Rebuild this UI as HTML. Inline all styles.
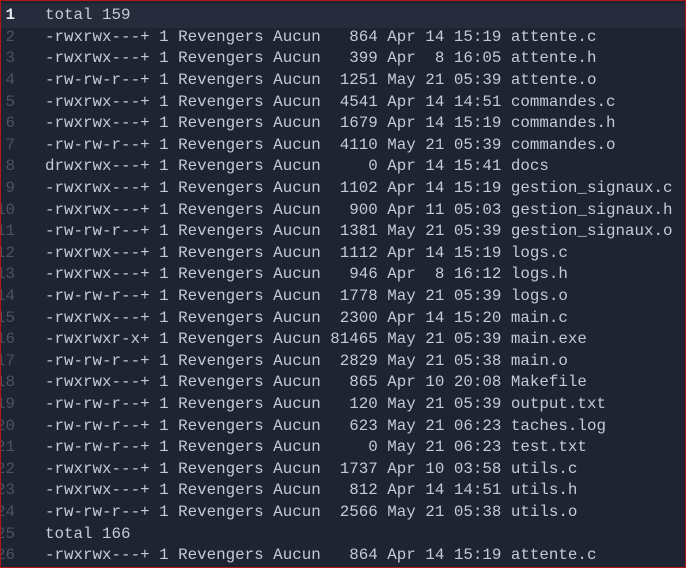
<!DOCTYPE html>
<html><head><meta charset="utf-8"><style>
html,body{margin:0;padding:0;background:#1f2433;width:686px;height:568px;overflow:hidden}
.wrap{position:absolute;left:0;top:0;width:684px;height:566px;border:1px solid #b01818;background:#1f2433;overflow:hidden}
.in{position:absolute;left:0;top:2px;width:684px;height:566px}
.row{position:absolute;left:0;width:684px;height:21.6px;line-height:21.6px;font-family:"Liberation Mono",monospace;font-size:15.85px;white-space:pre;color:#c5cad4}
.hl{background:#272c3c}
.n{position:absolute;right:670px;color:#4b5264;text-align:right}
.hl .n{color:#e8eaf0;font-weight:bold}
.t{position:absolute;left:44px}
</style></head><body><div class="wrap"><div class="in">
<div class="row hl" style="top:1.2px;height:23.6px;line-height:23.6px"><span class="n">1</span><span class="t">total 159</span></div>
<div class="row" style="top:23.8px"><span class="n">2</span><span class="t">-rwxrwx---+ 1 Revengers Aucun   864 Apr 14 15:19 attente.c</span></div>
<div class="row" style="top:45.4px"><span class="n">3</span><span class="t">-rwxrwx---+ 1 Revengers Aucun   399 Apr  8 16:05 attente.h</span></div>
<div class="row" style="top:67px"><span class="n">4</span><span class="t">-rw-rw-r--+ 1 Revengers Aucun  1251 May 21 05:39 attente.o</span></div>
<div class="row" style="top:88.6px"><span class="n">5</span><span class="t">-rwxrwx---+ 1 Revengers Aucun  4541 Apr 14 14:51 commandes.c</span></div>
<div class="row" style="top:110.2px"><span class="n">6</span><span class="t">-rwxrwx---+ 1 Revengers Aucun  1679 Apr 14 15:19 commandes.h</span></div>
<div class="row" style="top:131.8px"><span class="n">7</span><span class="t">-rw-rw-r--+ 1 Revengers Aucun  4110 May 21 05:39 commandes.o</span></div>
<div class="row" style="top:153.4px"><span class="n">8</span><span class="t">drwxrwx---+ 1 Revengers Aucun     0 Apr 14 15:41 docs</span></div>
<div class="row" style="top:175px"><span class="n">9</span><span class="t">-rwxrwx---+ 1 Revengers Aucun  1102 Apr 14 15:19 gestion_signaux.c</span></div>
<div class="row" style="top:196.6px"><span class="n">10</span><span class="t">-rwxrwx---+ 1 Revengers Aucun   900 Apr 11 05:03 gestion_signaux.h</span></div>
<div class="row" style="top:218.2px"><span class="n">11</span><span class="t">-rw-rw-r--+ 1 Revengers Aucun  1381 May 21 05:39 gestion_signaux.o</span></div>
<div class="row" style="top:239.8px"><span class="n">12</span><span class="t">-rwxrwx---+ 1 Revengers Aucun  1112 Apr 14 15:19 logs.c</span></div>
<div class="row" style="top:261.4px"><span class="n">13</span><span class="t">-rwxrwx---+ 1 Revengers Aucun   946 Apr  8 16:12 logs.h</span></div>
<div class="row" style="top:283px"><span class="n">14</span><span class="t">-rw-rw-r--+ 1 Revengers Aucun  1778 May 21 05:39 logs.o</span></div>
<div class="row" style="top:304.6px"><span class="n">15</span><span class="t">-rwxrwx---+ 1 Revengers Aucun  2300 Apr 14 15:20 main.c</span></div>
<div class="row" style="top:326.2px"><span class="n">16</span><span class="t">-rwxrwxr-x+ 1 Revengers Aucun 81465 May 21 05:39 main.exe</span></div>
<div class="row" style="top:347.8px"><span class="n">17</span><span class="t">-rw-rw-r--+ 1 Revengers Aucun  2829 May 21 05:38 main.o</span></div>
<div class="row" style="top:369.4px"><span class="n">18</span><span class="t">-rwxrwx---+ 1 Revengers Aucun   865 Apr 10 20:08 Makefile</span></div>
<div class="row" style="top:391px"><span class="n">19</span><span class="t">-rw-rw-r--+ 1 Revengers Aucun   120 May 21 05:39 output.txt</span></div>
<div class="row" style="top:412.6px"><span class="n">20</span><span class="t">-rw-rw-r--+ 1 Revengers Aucun   623 May 21 06:23 taches.log</span></div>
<div class="row" style="top:434.2px"><span class="n">21</span><span class="t">-rw-rw-r--+ 1 Revengers Aucun     0 May 21 06:23 test.txt</span></div>
<div class="row" style="top:455.8px"><span class="n">22</span><span class="t">-rwxrwx---+ 1 Revengers Aucun  1737 Apr 10 03:58 utils.c</span></div>
<div class="row" style="top:477.4px"><span class="n">23</span><span class="t">-rwxrwx---+ 1 Revengers Aucun   812 Apr 14 14:51 utils.h</span></div>
<div class="row" style="top:499px"><span class="n">24</span><span class="t">-rw-rw-r--+ 1 Revengers Aucun  2566 May 21 05:38 utils.o</span></div>
<div class="row" style="top:520.6px"><span class="n">25</span><span class="t">total 166</span></div>
<div class="row" style="top:542.2px"><span class="n">26</span><span class="t">-rwxrwx---+ 1 Revengers Aucun   864 Apr 14 15:19 attente.c</span></div>
</div></div></body></html>
